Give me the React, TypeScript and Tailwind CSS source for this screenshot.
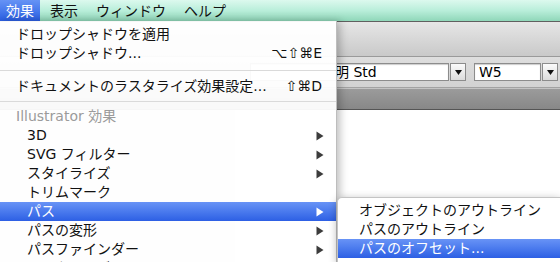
import React from "react";

type Item =
  | {kind: "item"; label: string; indent?: boolean; shortcut?: string; arrow?: boolean; selected?: boolean}
  | {kind: "sep"; h: string}
  | {kind: "header"; label: string};

const items: Item[] = [
  {kind: "item", label: "ドロップシャドウを適用"},
  {kind: "item", label: "ドロップシャドウ...", shortcut: "⌥⇧⌘E"},
  {kind: "sep", h: "h-[14px]"},
  {kind: "item", label: "ドキュメントのラスタライズ効果設定...", shortcut: "⇧⌘D"},
  {kind: "sep", h: "h-[11px]"},
  {kind: "header", label: "Illustrator 効果"},
  {kind: "item", label: "3D", indent: true, arrow: true},
  {kind: "item", label: "SVG フィルター", indent: true, arrow: true},
  {kind: "item", label: "スタイライズ", indent: true, arrow: true},
  {kind: "item", label: "トリムマーク", indent: true},
  {kind: "item", label: "パス", indent: true, arrow: true, selected: true},
  {kind: "item", label: "パスの変形", indent: true, arrow: true},
  {kind: "item", label: "パスファインダー", indent: true, arrow: true},
  {kind: "item", label: "ラスタライズ...", indent: true},
];

const subItems = [
  {label: "オブジェクトのアウトライン"},
  {label: "パスのアウトライン"},
  {label: "パスのオフセット...", selected: true},
];

const Arrow = ({white}: {white?: boolean}) => (
  <svg width="8" height="10" viewBox="0 0 8 10">
    <polygon points="0.5,0.5 7.5,5 0.5,9.5" fill={white ? "#ffffff" : "#3c3c3c"} />
  </svg>
);

const Combo = ({text, width, pad}: {text: string; width: string; pad: string}) => (
  <div className={`flex h-[18px] ${width}`}>
    <div
      className={`flex-1 flex items-center ${pad} bg-white border border-[#8c8c8c] shadow-[inset_0_1px_1px_rgba(0,0,0,0.2)] text-[14px] leading-none text-black whitespace-nowrap`}>
      {text}
    </div>
    <div className="w-[16px] ml-[1px] flex items-center justify-center border border-[#8c8c8c] bg-gradient-to-b from-[#fbfbfb] to-[#dcdcdc]">
      <svg width="7" height="5" viewBox="0 0 7 5">
        <polygon points="0,0 7,0 3.5,5" fill="#111" />
      </svg>
    </div>
  </div>
);

export default function App() {
  return (
    <div className="relative w-[560px] h-[262px] overflow-hidden bg-white text-[#111] font-['DejaVu_Sans','Noto_Sans_CJK_JP',sans-serif]">
      {/* menu bar */}
      <div className="flex h-[21px] items-center bg-gradient-to-b from-[#dcf9ee] via-[#b9eeda] to-[#8fd7b9] text-[14px] leading-none">
        <div className="h-full px-[6px] flex items-center bg-gradient-to-b from-[#6693f5] to-[#2b5ee3] text-white">効果</div>
        <div className="ml-[10px]">表示</div>
        <div className="ml-[18px]">ウィンドウ</div>
        <div className="ml-[18px]">ヘルプ</div>
      </div>

      {/* toolbar */}
      <div className="h-[36px] border-t border-t-[#606060] border-b border-b-[#9a9a9a] bg-gradient-to-b from-[#e6e6e6] to-[#c9c9c9]" />
      <div className="h-[31px] flex justify-end gap-[8px] pr-[2px] pt-[6px] bg-gradient-to-b from-[#dedede] to-[#d2d2d2] border-b border-[#a2a2a2]">
        <Combo text="明 Std" width="w-[216px]" pad="pl-[84px]" />
        <Combo text="W5" width="w-[84px]" pad="pl-[4px]" />
      </div>
      <div className="h-[22px] border-t border-[#c4c4c4] border-b border-b-[#555555] bg-gradient-to-b from-[#9b9b9b] to-[#888888]" />

      {/* canvas */}
      <div className="flex h-[152px]">
        <div className="w-[235px] bg-[#dcdcdc]" />
        <div className="flex-1 bg-white" />
      </div>

      {/* effect menu */}
      <div className="absolute left-0 top-[21px] bottom-0 w-[337px] pt-[4px] bg-white/[0.95] border-r border-[#bdbdbd] shadow-[3px_0_8px_rgba(0,0,0,0.25)] text-[14px]">
        {items.map((it, i) => {
          if (it.kind === "sep")
            return (
              <div key={i} className={`${it.h} flex items-center`}>
                <div className="w-full h-px bg-[#dadada]" />
              </div>
            );
          if (it.kind === "header")
            return (
              <div key={i} className="h-[19px] leading-[19px] pl-[16px] text-[#9b9b9b]">
                {it.label}
              </div>
            );
          return (
            <div
              key={i}
              className={`h-[19px] flex items-center justify-between leading-[19px] ${it.indent ? "pl-[27px]" : "pl-[16px]"} ${
                it.arrow ? "pr-[12px]" : "pr-[14px]"
              } ${it.selected ? "bg-gradient-to-b from-[#6893f6] to-[#2d5fe4] text-white" : ""}`}>
              <span className="whitespace-nowrap">{it.label}</span>
              {it.shortcut && <span className="whitespace-nowrap">{it.shortcut}</span>}
              {it.arrow && <Arrow white={it.selected} />}
            </div>
          );
        })}
      </div>

      {/* path submenu */}
      <div className="absolute left-[337px] top-[197px] right-0 bottom-0 pt-[3px] bg-white rounded-tl-[5px] border-l border-t border-[#c4c4c4] shadow-[0_2px_8px_rgba(0,0,0,0.3)] text-[14px]">
        {subItems.map((s, i) => (
          <div
            key={i}
            className={`h-[19px] leading-[19px] pl-[21px] whitespace-nowrap ${
              s.selected ? "bg-gradient-to-b from-[#6893f6] to-[#2d5fe4] text-white" : ""
            }`}>
            {s.label}
          </div>
        ))}
      </div>
    </div>
  );
}
